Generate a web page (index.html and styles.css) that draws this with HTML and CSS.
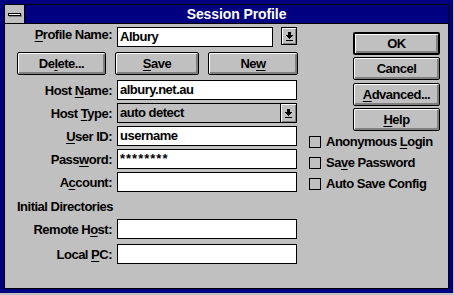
FILE: index.html
```html
<!DOCTYPE html>
<html lang="en">

<head>
    <meta charset="UTF-8" />
    <title>Session Profile</title>
    <link rel="stylesheet" href="styles.css">
</head>

<body>
    <div class="window">
        <div class="frame">
            <!-- Title Bar -->
            <div class="titlebar">
                <div class="sysmenu"><span class="sysmenu-bar"></span></div>
                <div class="title">Session Profile</div>
            </div>

            <!-- Dialog Body -->
            <div class="client">
                <div class="left">
                    <div class="field-row first">
                        <span class="label"><u>P</u>rofile Name:</span>
                        <div class="input short">Albury</div>
                        <div class="arrow-btn">
                            <svg width="9" height="9" viewBox="0 0 9 9" shape-rendering="crispEdges">
                                <rect x="3" y="0" width="3" height="3" />
                                <rect x="1" y="3" width="7" height="1" />
                                <rect x="2" y="4" width="5" height="1" />
                                <rect x="3" y="5" width="3" height="1" />
                                <rect x="4" y="6" width="1" height="1" />
                                <rect x="1" y="8" width="7" height="1" />
                            </svg>
                        </div>
                    </div>

                    <div class="btn-row">
                        <div class="btn w-delete"><span>De<u>l</u>ete...</span></div>
                        <div class="btn w-save"><span><u>S</u>ave</span></div>
                        <div class="btn w-new"><span>Ne<u>w</u></span></div>
                    </div>

                    <div class="fields">
                        <div class="field-row">
                            <span class="label">Host <u>N</u>ame:</span>
                            <div class="input">albury.net.au</div>
                        </div>
                        <div class="field-row">
                            <span class="label">Host <u>T</u>ype:</span>
                            <div class="dropdown">
                                <span class="dropdown-text">auto detect</span>
                                <div class="arrow-btn inner">
                                    <svg width="9" height="9" viewBox="0 0 9 9" shape-rendering="crispEdges">
                                        <rect x="3" y="0" width="3" height="3" />
                                        <rect x="1" y="3" width="7" height="1" />
                                        <rect x="2" y="4" width="5" height="1" />
                                        <rect x="3" y="5" width="3" height="1" />
                                        <rect x="4" y="6" width="1" height="1" />
                                        <rect x="1" y="8" width="7" height="1" />
                                    </svg>
                                </div>
                            </div>
                        </div>
                        <div class="field-row">
                            <span class="label"><u>U</u>ser ID:</span>
                            <div class="input">username</div>
                        </div>
                        <div class="field-row">
                            <span class="label">Pass<u>w</u>ord:</span>
                            <div class="input password">********</div>
                        </div>
                        <div class="field-row">
                            <span class="label">A<u>c</u>count:</span>
                            <div class="input"></div>
                        </div>
                    </div>

                    <div class="group-title">Initial Directories</div>

                    <div class="field-row dir">
                        <span class="label">Remote H<u>o</u>st:</span>
                        <div class="input"></div>
                    </div>
                    <div class="field-row dir">
                        <span class="label">Local <u>P</u>C:</span>
                        <div class="input"></div>
                    </div>
                </div>

                <div class="right">
                    <div class="btn side default"><span>OK</span></div>
                    <div class="btn side gap2"><span>Cancel</span></div>
                    <div class="btn side gap3"><span><u>A</u>dvanced...</span></div>
                    <div class="btn side gap2"><span><u>H</u>elp</span></div>

                    <div class="checks">
                        <div class="check"><span class="box"></span><span>Anonymous <u>L</u>ogin</span></div>
                        <div class="check"><span class="box"></span><span>Sa<u>v</u>e Password</span></div>
                        <div class="check"><span class="box"></span><span>Auto Save Config</span></div>
                    </div>
                </div>
            </div>
        </div>
    </div>
</body>

</html>
```

FILE: styles.css
```css
/* Reset & Global Styles */
* {
    margin: 0;
    padding: 0;
    box-sizing: border-box;
}

body {
    background: #c0c0c0;
    font-family: 'Liberation Sans', Arial, sans-serif;
    font-weight: bold;
    font-size: 13px;
    letter-spacing: -0.5px;
    color: #000;
    overflow: hidden;
}

u {
    text-decoration-thickness: 1px;
    text-underline-offset: 2px;
}

/* Window Frame */
.window {
    width: 453px;
    height: 293px;
    border: 4px solid #000080;
}

.frame {
    height: 100%;
    border: 1px solid #000;
    display: flex;
    flex-direction: column;
}

/* Title Bar */
.titlebar {
    height: 19px;
    display: flex;
    background: #000080;
    border-bottom: 1px solid #000;
}

.sysmenu {
    width: 20px;
    background: #c0c0c0;
    border-right: 1px solid #000;
    display: flex;
    align-items: center;
    justify-content: center;
}

.sysmenu-bar {
    width: 13px;
    height: 3px;
    background: #fff;
    border: 1px solid #000;
    box-shadow: 1px 1px 0 #808080;
}

.title {
    flex: 1;
    color: #fff;
    font-size: 14px;
    letter-spacing: -0.1px;
    line-height: 18px;
    text-align: center;
}

/* Dialog Body */
.client {
    flex: 1;
    display: flex;
}

.left {
    width: 304px;
    padding-top: 3px;
}

.field-row {
    display: flex;
    align-items: center;
    height: 20px;
    margin-top: 3px;
}

.field-row.first {
    margin-top: 0;
    align-items: flex-start;
}

.label {
    width: 107px;
    margin-right: 5px;
    text-align: right;
    white-space: nowrap;
}

.input {
    width: 180px;
    height: 20px;
    background: #fff;
    border: 1px solid #000;
    padding-left: 2px;
    line-height: 18px;
}

.input.short {
    width: 156px;
}

.input.password {
    letter-spacing: 1px;
}

.arrow-btn {
    width: 16px;
    height: 18px;
    margin-left: 8px;
    background: #c0c0c0;
    border: 1px solid #000;
    box-shadow: inset 1px 1px 0 #fff, inset -1px -1px 0 #808080;
    display: flex;
    align-items: center;
    justify-content: center;
}

.arrow-btn.inner {
    margin-left: 0;
    height: 18px;
    border: none;
    border-left: 1px solid #000;
}

.dropdown {
    width: 180px;
    height: 20px;
    background: #c0c0c0;
    border: 1px solid #000;
    display: flex;
}

.dropdown-text {
    flex: 1;
    padding-left: 2px;
    line-height: 18px;
}

/* Buttons */
.btn-row {
    display: flex;
    gap: 9px;
    margin-top: 5px;
    padding-left: 12px;
}

.btn {
    height: 23px;
    background: #c0c0c0;
    border: 1px solid #000;
    border-radius: 2px;
    box-shadow: inset 1px 1px 0 #fff, inset -2px -2px 0 #808080;
    display: flex;
    align-items: center;
    justify-content: center;
    white-space: nowrap;
}

.w-delete {
    width: 89px;
}

.w-save {
    width: 84px;
}

.w-new {
    width: 90px;
}

.fields {
    margin-top: 5px;
}

.group-title {
    margin-top: 7px;
    padding-left: 12px;
    line-height: 15px;
}

.field-row.dir {
    margin-top: 5px;
}

/* Right Column */
.right {
    flex: 1;
    padding-top: 8px;
}

.btn.side {
    width: 87px;
    margin-left: 44px;
}

.btn.default {
    border-width: 2px;
}

.gap2 {
    margin-top: 2px;
}

.gap3 {
    margin-top: 3px;
}

.check {
    height: 21px;
    display: flex;
    align-items: center;
    white-space: nowrap;
}

.box {
    width: 12px;
    height: 12px;
    border: 1px solid #000;
    margin-right: 5px;
}
```
